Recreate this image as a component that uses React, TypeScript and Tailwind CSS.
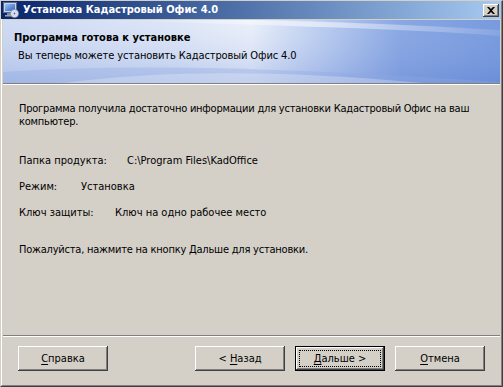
import React from "react";

const F = "font-['DejaVu_Sans_Condensed','DejaVu_Sans','Liberation_Sans',sans-serif]";

function Btn({ children, def }: { children: React.ReactNode; def?: boolean }) {
  if (def) {
    return (
      <div className="w-[90px] h-[25px] border border-black bg-[#d4d0c8] relative">
        <div className="absolute inset-0 shadow-[inset_-1px_-1px_#404040,inset_1px_1px_#ffffff,inset_-2px_-2px_#808080]" />
        <div className="absolute inset-[3px] border border-dotted border-black" />
        <div className="relative h-full flex items-center justify-center text-[11px] leading-[13px] text-black whitespace-pre">{children}</div>
      </div>
    );
  }
  return (
    <div className="w-[90px] h-[25px] bg-[#d4d0c8] shadow-[inset_-1px_-1px_#404040,inset_1px_1px_#ffffff,inset_-2px_-2px_#808080] flex items-center justify-center text-[11px] leading-[13px] text-black whitespace-pre">
      {children}
    </div>
  );
}

function U({ c }: { c: string }) {
  return <span className="underline underline-offset-[2px] decoration-[1px]">{c}</span>;
}

function AppIcon() {
  return (
    <svg width="16" height="16" viewBox="0 0 16 16">
      <defs>
        <linearGradient id="scr" x1="0" y1="0" x2="1" y2="1">
          <stop offset="0" stopColor="#9ec4f5" />
          <stop offset="1" stopColor="#2c5fc4" />
        </linearGradient>
      </defs>
      <rect x="0.5" y="0.5" width="13" height="10" fill="#c9d3e0" stroke="#5a6a86" />
      <rect x="2" y="2" width="10" height="7" fill="url(#scr)" />
      <rect x="4" y="11" width="6" height="2" fill="#7d8aa3" />
      <rect x="2" y="13" width="9" height="1.5" fill="#9aa6bb" />
      <circle cx="11.5" cy="11.5" r="4" fill="#f2f4f8" stroke="#7b8499" strokeWidth="0.8" />
      <circle cx="11.5" cy="11.5" r="2.4" fill="none" stroke="#b9c8e6" strokeWidth="0.8" />
      <circle cx="11.5" cy="11.5" r="1" fill="#3b5fa8" />
    </svg>
  );
}

function Banner() {
  return (
    <svg className="absolute inset-0" width="100%" height="100%" viewBox="0 0 497 63" preserveAspectRatio="none">
      <defs>
        <linearGradient id="bh" x1="0" y1="0" x2="1" y2="0">
          <stop offset="0" stopColor="#c6d4f1" />
          <stop offset="0.35" stopColor="#d8e2f6" />
          <stop offset="0.5" stopColor="#e6ecf9" />
          <stop offset="0.62" stopColor="#b7caef" />
          <stop offset="0.8" stopColor="#7497de" />
          <stop offset="1" stopColor="#5f88d8" />
        </linearGradient>
        <linearGradient id="bv" x1="0" y1="0" x2="0" y2="1">
          <stop offset="0" stopColor="#ffffff" stopOpacity="0.15" />
          <stop offset="1" stopColor="#7d98d8" stopOpacity="0.35" />
        </linearGradient>
        <linearGradient id="sw" x1="0" y1="0" x2="1" y2="0">
          <stop offset="0" stopColor="#ffffff" stopOpacity="0" />
          <stop offset="0.5" stopColor="#ffffff" stopOpacity="0.55" />
          <stop offset="1" stopColor="#ffffff" stopOpacity="0.1" />
        </linearGradient>
      </defs>
      <rect width="497" height="63" fill="url(#bh)" />
      <rect width="497" height="63" fill="url(#bv)" />
      <path d="M120 0 C 260 6, 400 8, 497 16 L 497 10 C 400 4, 300 1, 250 0 Z" fill="url(#sw)" />
      <path d="M0 52 C 120 44, 260 46, 497 62 L 497 63 L 0 63 Z" fill="#8ea9e2" fillOpacity="0.35" />
      <path d="M60 63 C 160 50, 280 50, 420 63 Z" fill="#ffffff" fillOpacity="0.25" />
    </svg>
  );
}

export default function App() {
  return (
    <div className={`w-[503px] h-[387px] ${F} text-black select-none`}>
      <div className="w-full h-full border border-[#404040] border-t-[#d4d0c8] border-l-[#d4d0c8] bg-[#d4d0c8]">
        <div className="w-full h-full border-l border-r border-b border-l-white border-r-[#808080] border-b-[#808080] flex flex-col">
          {/* Title bar */}
          <div className="h-[18px] -ml-px bg-gradient-to-r from-[#0a246a] to-[#a6caf0] flex items-start">
            <div className="ml-[2px] mt-[1px]"><AppIcon /></div>
            <div className="ml-[4px] mt-[2px] text-white font-bold text-[11px] leading-[14px] whitespace-nowrap">
              Установка Кадастровый Офис 4.0
            </div>
            <div className="ml-auto mr-[2px] mt-[3px] w-[16px] h-[13px] bg-[#d4d0c8] shadow-[inset_-1px_-1px_#404040,inset_1px_1px_#ffffff,inset_-2px_-2px_#808080] flex items-center justify-center">
              <svg width="8" height="7" viewBox="0 0 8 7">
                <path d="M0 0h2l2 2 2-2h2L5 3.5 8 7H6L4 5 2 7H0l3-3.5z" fill="#000" />
              </svg>
            </div>
          </div>
          <div className="h-px" />
          {/* Banner */}
          <div className="px-px">
            <div className="relative h-[63px] overflow-hidden">
              <Banner />
              <div className="relative pl-[11px] pt-[11px]">
                <div className="font-bold text-[11px] leading-[13px] whitespace-nowrap">Программа готова к установке</div>
                <div className="mt-[5px] pl-[4px] text-[11px] leading-[13px] tracking-[-0.1px] whitespace-nowrap">
                  Вы теперь можете установить Кадастровый Офис 4.0
                </div>
              </div>
            </div>
            <div className="h-px bg-[#808080]" />
            <div className="h-px bg-white" />
          </div>
          {/* Body */}
          <div className="flex-1 pl-[17px] pt-[17px] text-[11px] leading-[13px] tracking-[-0.22px]">
            <div className="w-[470px]">
              Программа получила достаточно информации для установки Кадастровый Офис на ваш компьютер.
            </div>
            <div className="mt-[26px] flex whitespace-nowrap tracking-normal">
              <span className="w-[108px]">Папка продукта:</span>
              <span>C:\Program Files\KadOffice</span>
            </div>
            <div className="mt-[13px] flex whitespace-nowrap tracking-normal">
              <span className="w-[62px]">Режим:</span>
              <span>Установка</span>
            </div>
            <div className="mt-[13px] flex whitespace-nowrap tracking-normal">
              <span className="w-[96px]">Ключ защиты:</span>
              <span>Ключ на одно рабочее место</span>
            </div>
            <div className="mt-[24px] whitespace-nowrap">Пожалуйста, нажмите на кнопку Дальше для установки.</div>
          </div>
          {/* Separator */}
          <div className="px-px">
            <div className="h-px bg-[#808080]" />
            <div className="h-px bg-white" />
          </div>
          {/* Buttons */}
          <div className="h-[48px] px-[16px] pt-[9px] flex items-start">
            <Btn><U c="С" />правка</Btn>
            <div className="flex-1" />
            <div className="flex gap-[10px]">
              <Btn>{"< "}<U c="Н" />азад</Btn>
              <Btn def><U c="Д" />{"альше >"}</Btn>
              <Btn><U c="О" />тмена</Btn>
            </div>
          </div>
        </div>
      </div>
    </div>
  );
}
